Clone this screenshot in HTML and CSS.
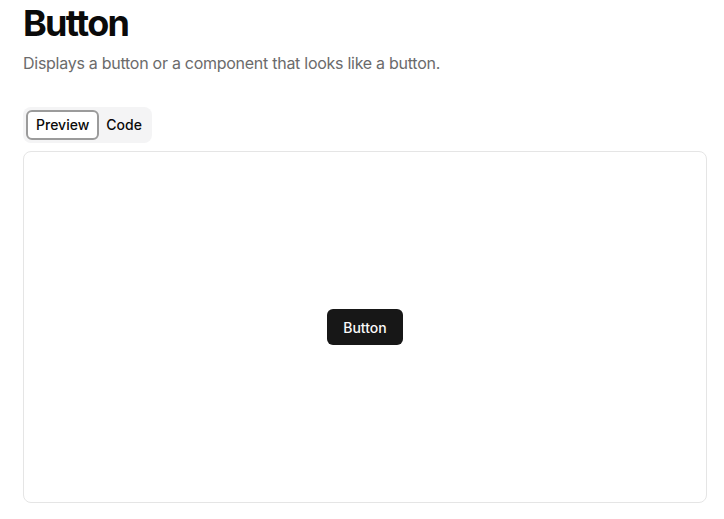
FILE: index.html
```html
<!DOCTYPE html>
<html lang="en">
<head>
    <meta charset="UTF-8">
    <meta name="viewport" content="width=device-width, initial-scale=1.0">
    <title>Button</title>
    <link rel="stylesheet" href="styles.css">
</head>
<body>
    <div class="page">
        <h1>Button</h1>
        <p class="lead">Displays a button or a component that looks like a button.</p>

        <div class="tabs">
            <button class="tab active">Preview</button>
            <button class="tab">Code</button>
        </div>

        <div class="preview">
            <button class="btn">Button</button>
        </div>
    </div>
</body>
</html>
```

FILE: styles.css
```css
body {
    font-family: Inter, "Noto Sans", Arial, sans-serif;
    background-color: white;
    color: #0a0a0a;
    margin: 0;
}

.page {
    padding: 3px 17px 0 23px;
}

h1 {
    font-size: 36px;
    line-height: 40px;
    font-weight: 700;
    letter-spacing: -1.7px;
    margin: 0;
}

.lead {
    font-size: 16px;
    line-height: 24px;
    color: #6b6b6b;
    letter-spacing: -0.27px;
    margin: 8px 0 0 0;
}

.tabs {
    display: inline-flex;
    align-items: center;
    margin-top: 32px;
    padding: 3px;
    background-color: #f4f4f5;
    border-radius: 8px;
}

.tab {
    font-family: inherit;
    font-size: 14px;
    font-weight: 500;
    color: #0a0a0a;
    background: none;
    border: none;
    border-radius: 6px;
    padding: 5px 7px;
    line-height: 20px;
    cursor: pointer;
}

.tab.active {
    background-color: white;
    border: 2px solid #9b9b9b;
    padding: 3px 8px;
}

.preview {
    margin-top: 8px;
    height: 350px;
    border: 1px solid #e5e5e5;
    border-radius: 8px;
    display: flex;
    justify-content: center;
    align-items: center;
}

.btn {
    font-family: inherit;
    font-size: 14px;
    font-weight: 500;
    color: #fafafa;
    background-color: #171717;
    border: none;
    border-radius: 6px;
    height: 36px;
    padding: 0 16px;
    cursor: pointer;
}
```
